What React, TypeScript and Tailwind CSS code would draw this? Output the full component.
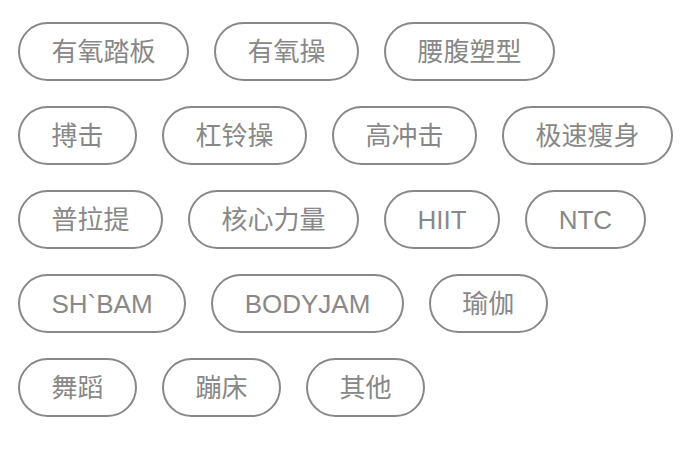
import React from 'react';

const tags = [
  '有氧踏板',
  '有氧操',
  '腰腹塑型',
  '搏击',
  '杠铃操',
  '高冲击',
  '极速瘦身',
  '普拉提',
  '核心力量',
  'HIIT',
  'NTC',
  'SH`BAM',
  'BODYJAM',
  '瑜伽',
  '舞蹈',
  '蹦床',
  '其他',
];

const App: React.FC = () => {
  return (
    <div
      className="w-[698px] h-[452px] bg-white px-[18px] pt-[22px]"
      style={{ fontFamily: '"Liberation Sans", "Noto Sans CJK SC", sans-serif' }}
    >
      <div className="flex flex-wrap gap-x-[25px] gap-y-[25px]">
        {tags.map((tag) => (
          <div
            key={tag}
            className="h-[59px] flex items-center justify-center rounded-full border-2 border-[#888888] px-[31.5px] text-[26px] leading-none text-[#888888]"
          >
            {tag}
          </div>
        ))}
      </div>
    </div>
  );
};

export default App;
